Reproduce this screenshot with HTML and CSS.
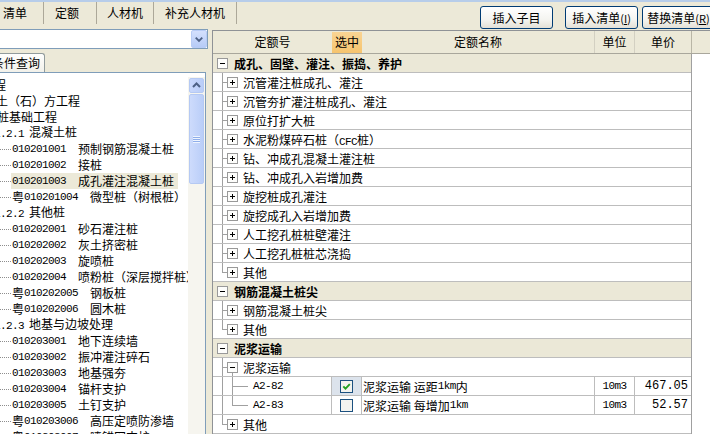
FILE: index.html
```html
<!DOCTYPE html>
<html lang="zh-CN">
<head>
<meta charset="utf-8">
<title>定额</title>
<link rel="stylesheet" href="styles.css">
</head>
<body>
<div class="app">
  <div class="topbar">
    <div class="tabs">
      <div class="tab t1">清单</div>
      <div class="tab t2">定额</div>
      <div class="tab t3">人材机</div>
      <div class="tab t4">补充人材机</div>
    </div>
    <div class="actions">
      <button class="btn b1">插入子目</button>
      <button class="btn b2">插入清单<span class="acc">(<u>I</u>)</span></button>
      <button class="btn b3">替换清单<span class="acc">(<u>R</u>)</span></button>
    </div>
  </div>
  <div class="main">
    <div class="left">
      <div class="combo">
        <div class="combo-btn"><svg width="15" height="16" viewBox="0 0 15 16"><path d="M4 6.5l3.5 3.5L11 6.5" fill="none" stroke="#4D6185" stroke-width="2"/></svg></div>
      </div>
      <div class="qtabs"><div class="qtab">条件查询</div></div>
      <div class="listbox">
        <div class="tree">
          <div class="trow"><span class="m18">工程</span></div>
          <div class="trow"><span class="m4">土（石）方工程</span></div>
          <div class="trow"><span class="m3">桩基础工程</span></div>
          <div class="trow"><span class="m6"><span class="code">1.2.1</span><span class="gap5">混凝土桩</span></span></div>
          <div class="trow"><span class="dots"></span><span class="item"><span class="code">010201001</span><span class="nm">预制钢筋混凝土桩</span></span></div>
          <div class="trow"><span class="dots"></span><span class="item"><span class="code">010201002</span><span class="nm">接桩</span></span></div>
          <div class="trow"><span class="dots"></span><span class="item sel"><span class="code">010201003</span><span class="nm">成孔灌注混凝土桩</span></span></div>
          <div class="trow"><span class="dots"></span><span class="item">粤<span class="code">010201004</span><span class="nm">微型桩（树根桩）</span></span></div>
          <div class="trow"><span class="m6"><span class="code">1.2.2</span><span class="gap5">其他桩</span></span></div>
          <div class="trow"><span class="dots"></span><span class="item"><span class="code">010202001</span><span class="nm">砂石灌注桩</span></span></div>
          <div class="trow"><span class="dots"></span><span class="item"><span class="code">010202002</span><span class="nm">灰土挤密桩</span></span></div>
          <div class="trow"><span class="dots"></span><span class="item"><span class="code">010202003</span><span class="nm">旋喷桩</span></span></div>
          <div class="trow"><span class="dots"></span><span class="item"><span class="code">010202004</span><span class="nm">喷粉桩（深层搅拌桩）</span></span></div>
          <div class="trow"><span class="dots"></span><span class="item">粤<span class="code">010202005</span><span class="nm">钢板桩</span></span></div>
          <div class="trow"><span class="dots"></span><span class="item">粤<span class="code">010202006</span><span class="nm">圆木桩</span></span></div>
          <div class="trow"><span class="m6"><span class="code">1.2.3</span><span class="gap5">地基与边坡处理</span></span></div>
          <div class="trow"><span class="dots"></span><span class="item"><span class="code">010203001</span><span class="nm">地下连续墙</span></span></div>
          <div class="trow"><span class="dots"></span><span class="item"><span class="code">010203002</span><span class="nm">振冲灌注碎石</span></span></div>
          <div class="trow"><span class="dots"></span><span class="item"><span class="code">010203003</span><span class="nm">地基强夯</span></span></div>
          <div class="trow"><span class="dots"></span><span class="item"><span class="code">010203004</span><span class="nm">锚杆支护</span></span></div>
          <div class="trow"><span class="dots"></span><span class="item"><span class="code">010203005</span><span class="nm">土钉支护</span></span></div>
          <div class="trow"><span class="dots"></span><span class="item">粤<span class="code">010203006</span><span class="nm">高压定喷防渗墙</span></span></div>
          <div class="trow"><span class="dots"></span><span class="item">粤<span class="code">010203007</span><span class="nm">喷锚网支护</span></span></div>
        </div>
        <div class="vscroll">
          <div class="sbtn"><svg width="13" height="13" viewBox="0 0 13 13"><path d="M3 8l3.5-3.5L10 8" fill="none" stroke="#4D6185" stroke-width="2"/></svg></div>
          <div class="thumb"><span class="grip"></span></div>
        </div>
      </div>
    </div>
    <div class="right">
      <div class="ghead">
        <div class="hcells">
          <div class="h h1">定额号</div>
          <div class="h h2">选中</div>
          <div class="h h3">定额名称</div>
          <div class="h h4">单位</div>
          <div class="h h5">单价</div>
        </div>
      </div>
      <div class="gbody">
        <div class="row grp"><svg class="box" width="11" height="11" viewBox="0 0 11 11"><rect x=".5" y=".5" width="10" height="10" fill="#fdfdfb" stroke="#999"/><path d="M3 5.5h5" stroke="#000"/></svg><span class="gt">成孔、固壁、灌注、振捣、养护</span></div>
        <div class="row ch"><span class="br"></span><svg class="box" width="11" height="11" viewBox="0 0 11 11"><rect x=".5" y=".5" width="10" height="10" fill="#fdfdfb" stroke="#999"/><path d="M3 5.5h5M5.5 3v5" stroke="#000"/></svg><span class="ct">沉管灌注桩成孔、灌注</span></div>
        <div class="row ch"><span class="br"></span><svg class="box" width="11" height="11" viewBox="0 0 11 11"><rect x=".5" y=".5" width="10" height="10" fill="#fdfdfb" stroke="#999"/><path d="M3 5.5h5M5.5 3v5" stroke="#000"/></svg><span class="ct">沉管夯扩灌注桩成孔、灌注</span></div>
        <div class="row ch"><span class="br"></span><svg class="box" width="11" height="11" viewBox="0 0 11 11"><rect x=".5" y=".5" width="10" height="10" fill="#fdfdfb" stroke="#999"/><path d="M3 5.5h5M5.5 3v5" stroke="#000"/></svg><span class="ct">原位打扩大桩</span></div>
        <div class="row ch"><span class="br"></span><svg class="box" width="11" height="11" viewBox="0 0 11 11"><rect x=".5" y=".5" width="10" height="10" fill="#fdfdfb" stroke="#999"/><path d="M3 5.5h5M5.5 3v5" stroke="#000"/></svg><span class="ct">水泥粉煤碎石桩（<span class="lat">CFC</span>桩）</span></div>
        <div class="row ch"><span class="br"></span><svg class="box" width="11" height="11" viewBox="0 0 11 11"><rect x=".5" y=".5" width="10" height="10" fill="#fdfdfb" stroke="#999"/><path d="M3 5.5h5M5.5 3v5" stroke="#000"/></svg><span class="ct">钻、冲成孔混凝土灌注桩</span></div>
        <div class="row ch"><span class="br"></span><svg class="box" width="11" height="11" viewBox="0 0 11 11"><rect x=".5" y=".5" width="10" height="10" fill="#fdfdfb" stroke="#999"/><path d="M3 5.5h5M5.5 3v5" stroke="#000"/></svg><span class="ct">钻、冲成孔入岩增加费</span></div>
        <div class="row ch"><span class="br"></span><svg class="box" width="11" height="11" viewBox="0 0 11 11"><rect x=".5" y=".5" width="10" height="10" fill="#fdfdfb" stroke="#999"/><path d="M3 5.5h5M5.5 3v5" stroke="#000"/></svg><span class="ct">旋挖桩成孔灌注</span></div>
        <div class="row ch"><span class="br"></span><svg class="box" width="11" height="11" viewBox="0 0 11 11"><rect x=".5" y=".5" width="10" height="10" fill="#fdfdfb" stroke="#999"/><path d="M3 5.5h5M5.5 3v5" stroke="#000"/></svg><span class="ct">旋挖成孔入岩增加费</span></div>
        <div class="row ch"><span class="br"></span><svg class="box" width="11" height="11" viewBox="0 0 11 11"><rect x=".5" y=".5" width="10" height="10" fill="#fdfdfb" stroke="#999"/><path d="M3 5.5h5M5.5 3v5" stroke="#000"/></svg><span class="ct">人工挖孔桩桩壁灌注</span></div>
        <div class="row ch"><span class="br"></span><svg class="box" width="11" height="11" viewBox="0 0 11 11"><rect x=".5" y=".5" width="10" height="10" fill="#fdfdfb" stroke="#999"/><path d="M3 5.5h5M5.5 3v5" stroke="#000"/></svg><span class="ct">人工挖孔桩桩芯浇捣</span></div>
        <div class="row ch"><span class="br last"></span><svg class="box" width="11" height="11" viewBox="0 0 11 11"><rect x=".5" y=".5" width="10" height="10" fill="#fdfdfb" stroke="#999"/><path d="M3 5.5h5M5.5 3v5" stroke="#000"/></svg><span class="ct">其他</span></div>

        <div class="row grp"><svg class="box" width="11" height="11" viewBox="0 0 11 11"><rect x=".5" y=".5" width="10" height="10" fill="#fdfdfb" stroke="#999"/><path d="M3 5.5h5" stroke="#000"/></svg><span class="gt">钢筋混凝土桩尖</span></div>
        <div class="row ch"><span class="br"></span><svg class="box" width="11" height="11" viewBox="0 0 11 11"><rect x=".5" y=".5" width="10" height="10" fill="#fdfdfb" stroke="#999"/><path d="M3 5.5h5M5.5 3v5" stroke="#000"/></svg><span class="ct">钢筋混凝土桩尖</span></div>
        <div class="row ch"><span class="br last"></span><svg class="box" width="11" height="11" viewBox="0 0 11 11"><rect x=".5" y=".5" width="10" height="10" fill="#fdfdfb" stroke="#999"/><path d="M3 5.5h5M5.5 3v5" stroke="#000"/></svg><span class="ct">其他</span></div>

        <div class="row grp"><svg class="box" width="11" height="11" viewBox="0 0 11 11"><rect x=".5" y=".5" width="10" height="10" fill="#fdfdfb" stroke="#999"/><path d="M3 5.5h5" stroke="#000"/></svg><span class="gt">泥浆运输</span></div>
        <div class="row ch"><span class="br"></span><span class="exp"><svg class="box" width="11" height="11" viewBox="0 0 11 11"><rect x=".5" y=".5" width="10" height="10" fill="#fdfdfb" stroke="#999"/><path d="M3 5.5h5" stroke="#000"/></svg></span><span class="ct">泥浆运输</span></div>
        <div class="row data">
          <div class="c c1"><span class="vpass"></span><span class="br2"></span><span class="dno">A2-82</span></div>
          <div class="c c2 on"><svg width="13" height="13" viewBox="0 0 13 13"><rect x=".5" y=".5" width="12" height="12" fill="#f3f3ef" stroke="#1C5180"/><path d="M3.3 6.3l2.2 2.3 4.3-4.4" fill="none" stroke="#21A121" stroke-width="1.9"/></svg></div>
          <div class="c c3">泥浆运输 运距<span class="lat">1km</span>内</div>
          <div class="c c4">10m3</div>
          <div class="c c5">467.05</div>
        </div>
        <div class="row data">
          <div class="c c1"><span class="vpass"></span><span class="br2 last"></span><span class="dno">A2-83</span></div>
          <div class="c c2"><svg width="13" height="13" viewBox="0 0 13 13"><rect x=".5" y=".5" width="12" height="12" fill="#f3f3ef" stroke="#1C5180"/></svg></div>
          <div class="c c3">泥浆运输 每增加<span class="lat">1km</span></div>
          <div class="c c4">10m3</div>
          <div class="c c5">52.57</div>
        </div>
        <div class="row ch"><span class="br last"></span><svg class="box" width="11" height="11" viewBox="0 0 11 11"><rect x=".5" y=".5" width="10" height="10" fill="#fdfdfb" stroke="#999"/><path d="M3 5.5h5M5.5 3v5" stroke="#000"/></svg><span class="ct">其他</span></div>
      </div>
    </div>
  </div>
</div>
</body>
</html>
```

FILE: styles.css
```css
* { box-sizing: border-box; }
html, body { margin: 0; padding: 0; }
body {
  background: #ECE9D8;
  font-family: "Noto Sans CJK SC", "Liberation Sans", sans-serif;
  font-size: 12px;
  color: #000;
}
.app {
  width: 710px;
  height: 434px;
  overflow: hidden;
  display: flex;
  flex-direction: column;
  background: #ECE9D8;
}

/* top bar */
.topbar {
  height: 29px;
  flex: none;
  display: flex;
  align-items: flex-start;
  border-top: 2px solid #B7CDEA;
}
.tabs { display: flex; height: 22px; flex: none; }
.tab {
  height: 22px;
  line-height: 21px;
  border-right: 1px solid #ACA899;
  white-space: nowrap;
}
.t1 { width: 44px; padding-left: 3px; }
.t2 { width: 53px; padding-left: 11px; }
.t3 { width: 57px; padding-left: 10px; }
.t4 { width: 83px; padding-left: 11px; }

.actions { display: flex; margin-left: 243px; margin-top: 4px; flex: none; }
.btn {
  height: 23px;
  padding: 0;
  border: 1px solid #003C74;
  border-radius: 3px;
  background: linear-gradient(#FFFFFF, #F4F4F0 60%, #E3E0D6);
  font-family: "Noto Sans CJK SC", sans-serif;
  font-size: 12px;
  line-height: 20px;
  color: #000;
  white-space: nowrap;
  flex: none;
}
.b1 { width: 73px; }
.b2 { width: 73px; margin-left: 12px; }
.b3 { width: 73px; margin-left: 4px; }
.acc { font-size: 11px; }

/* main */
.main { display: flex; flex: 1; min-height: 0; }
.left { width: 208px; flex: none; display: flex; flex-direction: column; }
.combo {
  height: 20px;
  flex: none;
  background: #fff;
  border: 1px solid #7F9DB9;
  border-left: none;
  display: flex;
  justify-content: flex-end;
}
.combo-btn {
  width: 16px;
  height: 18px;
  border: 1px solid #B8CCF6;
  border-radius: 2px;
  background: linear-gradient(#D4E0FD, #B6CBF7);
  display: flex;
  align-items: center;
  justify-content: center;
}
.qtabs { height: 23px; flex: none; padding-top: 4px; }
.qtab {
  width: 55px;
  height: 19px;
  margin-left: -10px;
  padding-left: 1px;
  line-height: 17px;
  border: 1px solid #919B9C;
  border-bottom: none;
  border-radius: 3px 3px 0 0;
  background: linear-gradient(#FEFEFD, #F2F1EA);
  white-space: nowrap;
  overflow: hidden;
}
.listbox {
  width: 206px;
  flex: 1;
  min-height: 0;
  background: #fff;
  border-top: 1px solid #7F9DB9;
  border-right: 1px solid #7F9DB9;
  padding-top: 4px;
  display: flex;
}
.tree { width: 188px; flex: none; overflow: hidden; }
.trow {
  height: 16px;
  line-height: 16px;
  display: flex;
  align-items: center;
  white-space: nowrap;
}
.m18 { margin-left: -18px; }
.m4 { margin-left: -4px; }
.m3 { margin-left: -3px; }
.m6 { margin-left: -6px; }
.gap5 { margin-left: 5px; }
.code { font-family: "Liberation Mono", monospace; font-size: 11px; letter-spacing: -0.6px; }
.dots {
  width: 11px;
  height: 1px;
  flex: none;
  background: repeating-linear-gradient(90deg, #8E8E8E 0 1px, transparent 1px 2px);
}
.item { padding: 0 4px 0 1px; height: 16px; display: flex; align-items: center; }
.item.sel { background: #ECE9D8; }
.nm { margin-left: 12px; }

.vscroll {
  width: 17px;
  flex: none;
  background: #F6F5EF;
  padding: 1px 1px 0 1px;
}
.sbtn {
  height: 15px;
  border: 1px solid #B5C9F3;
  border-radius: 2px;
  background: linear-gradient(90deg, #C9D8FC, #B9CDF8);
  display: flex;
  align-items: center;
  justify-content: center;
}
.thumb {
  height: 90px;
  margin-top: 1px;
  border: 1px solid #B5C9F3;
  border-radius: 2px;
  background: linear-gradient(90deg, #CDDBFC, #BACEF8);
  display: flex;
  align-items: center;
  justify-content: center;
}
.grip {
  width: 7px;
  height: 7px;
  background: repeating-linear-gradient(#EEF4FE 0 1px, #8FAEEA 1px 2px);
}

/* right grid */
.right {
  flex: 1;
  min-width: 0;
  margin-left: 4px;
  margin-top: 1px;
  border-left: 1px solid #8F9296;
  border-top: 1px solid #8F9296;
  background: #fff;
  overflow: hidden;
}
.ghead {
  height: 23px;
  background: #ECE9D8;
  border-bottom: 1px solid #A9A79C;
}
.hcells { display: flex; width: 479px; height: 22px; border-right: 1px solid #B9B6A6; }
.h { height: 22px; line-height: 21px; text-align: center; white-space: nowrap; }
.h1 { width: 119px; }
.h2 { width: 30px; margin-top: 1px; height: 21px; line-height: 20px; background: linear-gradient(#FAD493, #F6C46E); }
.h3 { width: 233px; border-right: 1px solid #D3D0C2; }
.h4 { width: 40px; border-right: 1px solid #D3D0C2; }
.h5 { width: 56px; }

.gbody { width: 479px; border-right: 1px solid #A0A0A0; }
.row {
  height: 19px;
  border-bottom: 1px solid #BDBDBD;
  display: flex;
  align-items: center;
  white-space: nowrap;
}
.box { flex: none; display: block; }
.grp { background: #EBE8D7; padding-left: 4px; }
.gt { margin-left: 6px; font-weight: bold; }
.ch { padding-left: 9px; }
.ct { margin-left: 5px; }
.lat { font-family: "Liberation Mono", monospace; font-size: 11px; letter-spacing: -0.6px; }
.br {
  width: 5px;
  align-self: stretch;
  flex: none;
  background:
    linear-gradient(#A0A0A0, #A0A0A0) left top / 1px 100% no-repeat,
    linear-gradient(#A0A0A0, #A0A0A0) left center / 100% 1px no-repeat;
}
.br.last {
  background:
    linear-gradient(#A0A0A0, #A0A0A0) left top / 1px 50% no-repeat,
    linear-gradient(#A0A0A0, #A0A0A0) left center / 100% 1px no-repeat;
}
.exp {
  width: 11px;
  align-self: stretch;
  display: flex;
  align-items: center;
  flex: none;
  background: linear-gradient(#A0A0A0, #A0A0A0) 5px bottom / 1px 50% no-repeat;
}

.data { align-items: stretch; }
.c { display: flex; align-items: center; border-right: 1px solid #BDBDBD; overflow: hidden; }
.c1 { width: 119px; padding-left: 9px; align-items: stretch; }
.c2 { width: 30px; justify-content: center; }
.c2.on { background: #DCE3EC; }
.c3 { width: 233px; padding-left: 1px; }
.c4 { width: 40px; justify-content: center; font-family: "Liberation Mono", monospace; font-size: 11px; letter-spacing: -0.6px; }
.c5 { width: 56px; border-right: none; justify-content: flex-end; padding-right: 3px; font-family: "Liberation Mono", monospace; font-size: 12px; }
.vpass {
  width: 10px;
  flex: none;
  background: linear-gradient(#A0A0A0, #A0A0A0) left top / 1px 100% no-repeat;
}
.br2 {
  width: 16px;
  flex: none;
  background:
    linear-gradient(#A0A0A0, #A0A0A0) left top / 1px 100% no-repeat,
    linear-gradient(#A0A0A0, #A0A0A0) left center / 100% 1px no-repeat;
}
.br2.last {
  background:
    linear-gradient(#A0A0A0, #A0A0A0) left top / 1px 50% no-repeat,
    linear-gradient(#A0A0A0, #A0A0A0) left center / 100% 1px no-repeat;
}
.dno {
  margin-left: 5px;
  display: flex;
  align-items: center;
  font-family: "Liberation Mono", monospace;
  font-size: 11px;
  letter-spacing: -0.6px;
}
```
